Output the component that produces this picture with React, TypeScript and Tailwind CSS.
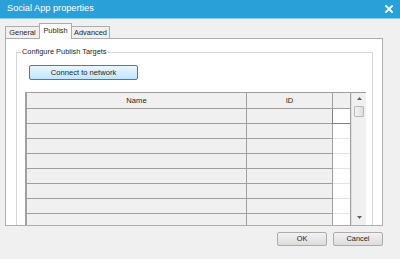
import React from "react";

const rows = Array.from({ length: 8 });

export default function App() {
  return (
    <div
      className="w-[400px] h-[259px] bg-[#f0f0f0] flex flex-col overflow-hidden text-[#1e1e1e]"
      style={{ fontFamily: '"Liberation Sans", Arial, sans-serif' }}
    >
      {/* Title bar */}
      <div className="h-[19px] shrink-0 bg-[#2aa0d8] border-b border-[#86cdee] flex items-center justify-between pl-[7px] pr-[7px]">
        <span className="text-white text-[9.2px] leading-none">Social App properties</span>
        <svg width="8" height="8" viewBox="0 0 8 8">
          <path d="M1 1 L7 7 M7 1 L1 7" stroke="white" strokeWidth="1.8" strokeLinecap="square" />
        </svg>
      </div>

      {/* Tabs */}
      <div className="h-[19px] shrink-0 flex items-end pl-[5px] text-[7.4px] leading-none">
        <div className="w-[35px] h-[12px] border border-b-0 border-[#adadad] bg-[#f0f0f0] flex items-center justify-center">
          General
        </div>
        <div className="w-[33px] h-[16px] -mb-px -mx-px border border-b-0 border-[#adadad] bg-white flex items-start pt-[3px] justify-center relative z-10">
          Publish
        </div>
        <div className="w-[39px] h-[12px] border border-b-0 border-[#adadad] bg-[#f0f0f0] flex items-center justify-center">
          Advanced
        </div>
      </div>

      {/* Tab panel */}
      <div className="ml-[5px] w-[378px] h-[188px] shrink-0 bg-white border border-[#adadad] overflow-hidden pt-[13px] pl-[10px]">
        <div className="relative w-[357px] h-[200px] border border-[#d5d5d5] pt-[12px] pl-[8px]">
          <span className="absolute -top-[6px] left-[4px] bg-white px-[1px] text-[7.4px] leading-[10px]">
            Configure Publish Targets
          </span>
          <div className="ml-[4px] w-[109px] h-[15px] rounded-[2px] border border-[#3c7fb1] bg-gradient-to-b from-[#eaf6fd] to-[#bee6fd] flex items-center justify-center text-[7.6px] leading-none">
            Connect to network
          </div>

          {/* Table */}
          <div className="mt-[12px] w-[341px] flex border-l-2 border-t border-[#a0a0a0] bg-white">
            <div className="flex-1 flex flex-col text-[7.6px] leading-none">
              <div className="flex h-[16px] border-b border-[#a0a0a0] bg-[#f0f0f0]">
                <div className="w-[220px] border-r border-[#a0a0a0] flex items-center justify-center">Name</div>
                <div className="w-[86px] border-r border-[#a0a0a0] flex items-center justify-center">ID</div>
                <div className="flex-1" />
              </div>
              {rows.map((_, i) => (
                <div key={i} className="flex h-[15px] shrink-0">
                  <div className="w-[220px] border-r border-b border-[#a0a0a0] bg-[#f0f0f0]" />
                  <div className="w-[86px] border-r border-b border-[#a0a0a0] bg-[#f0f0f0]" />
                  <div
                    className={
                      i === 0
                        ? "flex-1 bg-white border-b border-[#808080] border-l border-l-[#808080] -ml-px"
                        : "flex-1 bg-white border-b border-[#e3e3e3]"
                    }
                  />
                </div>
              ))}
            </div>
            <div className="w-px bg-[#a0a0a0]" />
            <div className="w-[15px] bg-[#f0f0f0] border-l border-[#e0e0e0] flex flex-col items-center pt-[4px]">
              <svg width="5" height="3" viewBox="0 0 5 3">
                <path d="M0 3 L2.5 0 L5 3 Z" fill="#606060" />
              </svg>
              <div className="mt-[6px] w-[10px] h-[11px] rounded-[1px] border border-[#b8b8b8] bg-gradient-to-r from-[#f4f4f4] to-[#dedede]" />
              <div className="h-[99px]" />
              <svg width="5" height="3" viewBox="0 0 5 3">
                <path d="M0 0 L2.5 3 L5 0 Z" fill="#606060" />
              </svg>
            </div>
          </div>
        </div>
      </div>

      {/* Buttons */}
      <div className="flex justify-end gap-[6px] pr-[17px] mt-[6px] text-[7.4px] leading-none">
        <div className="w-[50px] h-[14px] rounded-[2px] border border-[#acacac] bg-gradient-to-b from-[#f2f2f2] to-[#dcdcdc] flex items-center justify-center">
          OK
        </div>
        <div className="w-[50px] h-[14px] rounded-[2px] border border-[#acacac] bg-gradient-to-b from-[#f2f2f2] to-[#dcdcdc] flex items-center justify-center">
          Cancel
        </div>
      </div>
    </div>
  );
}
